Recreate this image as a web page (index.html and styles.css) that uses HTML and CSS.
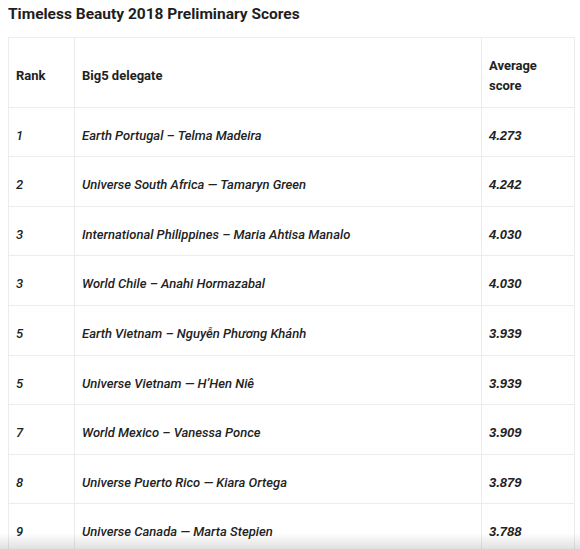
FILE: index.html
```html
<!DOCTYPE html>
<html>
<head>
<meta charset="utf-8">
<link rel="stylesheet" href="styles.css">
</head>
<body>
<h2 class="title">Timeless Beauty 2018 Preliminary Scores</h2>
<table class="scores">
  <thead>
    <tr><th class="c-rank">Rank</th><th class="c-name">Big5 delegate</th><th class="c-score">Average<br>score</th></tr>
  </thead>
  <tbody>
    <tr><td>1</td><td>Earth Portugal – Telma Madeira</td><td class="num">4.273</td></tr>
    <tr><td>2</td><td>Universe South Africa — Tamaryn Green</td><td class="num">4.242</td></tr>
    <tr><td>3</td><td>International Philippines – Maria Ahtisa Manalo</td><td class="num">4.030</td></tr>
    <tr><td>3</td><td>World Chile – Anahi Hormazabal</td><td class="num">4.030</td></tr>
    <tr><td>5</td><td>Earth Vietnam – Nguyễn Phương Khánh</td><td class="num">3.939</td></tr>
    <tr><td>5</td><td>Universe Vietnam — H’Hen Niê</td><td class="num">3.939</td></tr>
    <tr><td>7</td><td>World Mexico – Vanessa Ponce</td><td class="num">3.909</td></tr>
    <tr><td>8</td><td>Universe Puerto Rico — Kiara Ortega</td><td class="num">3.879</td></tr>
    <tr><td>9</td><td>Universe Canada — Marta Stepien</td><td class="num">3.788</td></tr>
  </tbody>
</table>
</body>
</html>
```
FILE: styles.css
```css
html, body {
  margin: 0;
  background: #fff;
}
body {
  padding: 0 8px;
  font-family: Roboto, "Liberation Sans", sans-serif;
  color: #222;
}
body::after {
  content: "";
  position: fixed;
  left: 0;
  right: 0;
  bottom: 0;
  height: 16px;
  background: linear-gradient(to bottom, rgba(0,0,0,0), rgba(0,0,0,0.12));
  pointer-events: none;
}
.title {
  margin: 0;
  padding-top: 4px;
  height: 33px;
  font-size: 15.5px;
  font-weight: 700;
  line-height: 20px;
  color: #1e1e1e;
}
.scores {
  width: 567px;
  border-collapse: collapse;
  font-size: 13px;
  line-height: 20px;
}
.scores th, .scores td {
  border: 1px solid #ececec;
  padding: 18px 7px 10.6px;
  text-align: left;
  vertical-align: middle;
}
.scores th {
  font-weight: 700;
}
.scores td {
  font-style: italic;
  font-weight: 500;
}
.c-rank { width: 51px; }
.c-score { width: 78px; }
.scores td.num {
  font-family: "Liberation Sans", Arial, sans-serif;
  font-weight: 700;
}
```
